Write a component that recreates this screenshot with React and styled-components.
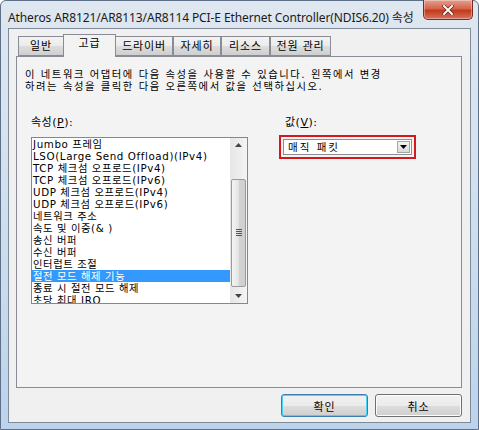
import styled, { createGlobalStyle } from 'styled-components'

const GlobalStyle = createGlobalStyle`
  html, body { margin: 0; padding: 0; background: #ffffff; }
  body { font-family: "DejaVu Sans", "Noto Sans CJK KR", sans-serif; }
`

const KR = `"DejaVu Sans", "Noto Sans CJK KR", sans-serif`

const Window = styled.div`
  width: 479px;
  height: 430px;
  box-sizing: border-box;
  padding: 0 7px 6px 7px;
  display: flex;
  flex-direction: column;
  border: 1px solid #5e7088;
  border-radius: 6px 6px 0 0;
  background: linear-gradient(180deg, #dfe7f0 0%, #d3e1ef 40%, #bcd3eb 100%);
`

const TitleBar = styled.div`
  height: 27px;
  display: flex;
  justify-content: space-between;
  align-items: flex-start;
  margin-right: -2px;
`

const Title = styled.div`
  padding-top: 9px;
  font-family: "Noto Sans", "Noto Sans CJK KR", sans-serif;
  font-size: 12px;
  line-height: 16px;
  color: #1b1b1b;
  white-space: nowrap;
  letter-spacing: -0.1px;
`

const CloseButton = styled.div`
  width: 48px;
  height: 19px;
  margin-top: -1px;
  border: 1px solid #7a2b25;
  border-top: none;
  border-radius: 0 0 5px 5px;
  background: linear-gradient(180deg, #e5a08f 0%, #d5644b 45%, #c23a1c 55%, #d8735c 100%);
  display: flex;
  align-items: center;
  justify-content: center;
  box-shadow: inset 0 0 0 1px rgba(255,255,255,0.35);
`

const Client = styled.div`
  flex: 1;
  border: 1px solid #7f8b99;
  background: #f0f0f0;
  display: flex;
  flex-direction: column;
  padding: 5px 8px 5px 7px;
`

const TabStrip = styled.div`
  display: flex;
  align-items: flex-end;
  padding-left: 2px;
  height: 22px;
  position: relative;
  z-index: 1;
`

const Tab = styled.div`
  box-sizing: border-box;
  width: ${p => p.$w}px;
  height: ${p => (p.$active ? 23 : 20)}px;
  margin: ${p => (p.$active ? '0 -1px -1px -1px' : '0')};
  padding-top: ${p => (p.$active ? 2 : 3)}px;
  border: 1px solid #898c95;
  border-bottom: ${p => (p.$active ? 'none' : '1px solid #898c95')};
  background: ${p => (p.$active ? '#f3f3f3' : 'linear-gradient(180deg, #f3f3f3 0%, #ebebeb 50%, #dddddd 51%, #cfcfcf 100%)')};
  font-family: ${KR};
  font-size: 11px;
  line-height: 13px;
  letter-spacing: 0.8px;
  color: #000;
  text-align: center;
  white-space: nowrap;
  position: relative;
  z-index: ${p => (p.$active ? 2 : 0)};
`

const Panel = styled.div`
  height: 332px;
  box-sizing: border-box;
  border: 1px solid #898c95;
  background: #f3f3f3;
  padding: 11px 8px 0 8px;
  display: flex;
  flex-direction: column;
`

const Description = styled.p`
  margin: 0;
  font-family: ${KR};
  font-size: 10.3px;
  line-height: 12px;
  color: #000;
  letter-spacing: 1.55px;
  white-space: nowrap;
`

const Fields = styled.div`
  display: flex;
  gap: 32px;
  padding: 24px 0 0 6px;
`

const Column = styled.div`
  display: flex;
  flex-direction: column;
  width: ${p => p.$width}px;
`

const Label = styled.div`
  font-family: ${KR};
  font-size: 11px;
  line-height: 13px;
  letter-spacing: 0.5px;
  color: #000;
  margin: 0 0 ${p => p.$gap}px ${p => p.$indent}px;
  u { text-decoration: underline; }
`

const ListBox = styled.div`
  height: 167px;
  box-sizing: border-box;
  border: 1px solid #828790;
  background: #fff;
  display: flex;
  overflow: hidden;
`

const Items = styled.div`
  flex: 1;
  overflow: hidden;
`

const Item = styled.div`
  height: 12px;
  font-family: ${KR};
  font-size: 10.3px;
  line-height: 12px;
  letter-spacing: 0.6px;
  padding-left: 1px;
  white-space: nowrap;
  color: ${p => (p.$selected ? '#fff' : '#000')};
  background: ${p => (p.$selected ? '#3399ff' : 'transparent')};
`

const ScrollBar = styled.div`
  width: 17px;
  background: linear-gradient(90deg, #e6e6e6, #f4f4f4);
  display: flex;
  flex-direction: column;
  align-items: center;
`

const Arrow = styled.div`
  height: 17px;
  display: flex;
  align-items: center;
  justify-content: center;
`

const Track = styled.div`
  flex: 1;
  width: 100%;
  display: flex;
  flex-direction: column;
  padding-top: 26px;
  padding-bottom: 2px;
  box-sizing: border-box;
`

const Thumb = styled.div`
  height: 106px;
  margin: 0 1px;
  border: 1px solid #9b9b9b;
  border-radius: 2px;
  background: linear-gradient(90deg, #f5f5f5 0%, #e4e4e4 50%, #d2d2d2 51%, #cfcfcf 100%);
  display: flex;
  align-items: center;
  justify-content: center;
`

const Grip = styled.div`
  width: 6px;
  height: 8px;
  background: repeating-linear-gradient(180deg, #555 0 1px, transparent 1px 2px);
`

const Highlight = styled.div`
  border: 2px solid #d6171e;
  padding: 2px;
  margin-left: -1px;
`

const Combo = styled.div`
  height: 16px;
  box-sizing: border-box;
  border: 1px solid #8f8f8f;
  background: #fff;
  display: flex;
  align-items: stretch;
  padding: 1px;
`

const ComboText = styled.div`
  flex: 1;
  font-family: ${KR};
  font-size: 10.5px;
  line-height: 12px;
  letter-spacing: 2px;
  padding-left: 3px;
  color: #000;
`

const DropButton = styled.div`
  width: 11px;
  border: 1px solid #a5a5a5;
  background: linear-gradient(180deg, #f4f4f4, #d9d9d9);
  display: flex;
  align-items: center;
  justify-content: center;
`

const ButtonRow = styled.div`
  display: flex;
  justify-content: flex-end;
  gap: 7px;
  padding-top: 6px;
`

const Button = styled.button`
  width: 87px;
  height: 23px;
  border: 1px solid ${p => (p.$default ? '#3c7fb1' : '#707070')};
  border-radius: 3px;
  background: linear-gradient(180deg, #f2f2f2 0%, #ebebeb 50%, #dddddd 51%, #cfcfcf 100%);
  box-shadow: inset 0 0 0 1px ${p => (p.$default ? '#48d3fb' : '#fcfcfc')};
  font-family: ${KR};
  font-size: 11px;
  letter-spacing: 1px;
  color: #000;
  padding: 0;
`

const tabs = [
  { name: '일반', w: 46 },
  { name: '고급', w: 53 },
  { name: '드라이버', w: 58 },
  { name: '자세히', w: 48 },
  { name: '리소스', w: 49 },
  { name: '전원 관리', w: 61 },
]

const props = [
  'Jumbo 프레임',
  'LSO(Large Send Offload)(IPv4)',
  'TCP 체크섬 오프로드(IPv4)',
  'TCP 체크섬 오프로드(IPv6)',
  'UDP 체크섬 오프로드(IPv4)',
  'UDP 체크섬 오프로드(IPv6)',
  '네트워크 주소',
  '속도 및 이중(& )',
  '송신 버퍼',
  '수신 버퍼',
  '인터럽트 조절',
  '절전 모드 해제 기능',
  '종료 시 절전 모드 해제',
  '초당 최대 IRQ',
]

export default function App() {
  return (
    <>
      <GlobalStyle />
      <Window>
        <TitleBar>
          <Title>Atheros AR8121/AR8113/AR8114 PCI-E Ethernet Controller(NDIS6.20) 속성</Title>
          <CloseButton>
            <svg width="12" height="10" viewBox="0 0 12 10">
              <path d="M2 1 L10 9 M10 1 L2 9" stroke="#5a1a10" strokeWidth="3.2" strokeLinecap="square" />
              <path d="M2 1 L10 9 M10 1 L2 9" stroke="#ffffff" strokeWidth="2" strokeLinecap="square" />
            </svg>
          </CloseButton>
        </TitleBar>
        <Client>
          <TabStrip>
            {tabs.map(t => (
              <Tab key={t.name} $w={t.w} $active={t.name === '고급'}>{t.name}</Tab>
            ))}
          </TabStrip>
          <Panel>
            <Description>
              이 네트워크 어댑터에 다음 속성을 사용할 수 있습니다. 왼쪽에서 변경<br />
              하려는 속성을 클릭한 다음 오른쪽에서 값을 선택하십시오.
            </Description>
            <Fields>
              <Column $width={217}>
                <Label $gap={8} $indent={0}>속성(<u>P</u>):</Label>
                <ListBox>
                  <Items>
                    {props.map(p => (
                      <Item key={p} $selected={p === '절전 모드 해제 기능'}>{p}</Item>
                    ))}
                  </Items>
                  <ScrollBar>
                    <Arrow>
                      <svg width="7" height="4" viewBox="0 0 7 4"><path d="M0 4 L3.5 0 L7 4 Z" fill="#444" /></svg>
                    </Arrow>
                    <Track>
                      <Thumb><Grip /></Thumb>
                    </Track>
                    <Arrow>
                      <svg width="7" height="4" viewBox="0 0 7 4"><path d="M0 0 L7 0 L3.5 4 Z" fill="#444" /></svg>
                    </Arrow>
                  </ScrollBar>
                </ListBox>
              </Column>
              <Column $width={136}>
                <Label $gap={6} $indent={5}>값(<u>V</u>):</Label>
                <Highlight>
                  <Combo>
                    <ComboText>매직 패킷</ComboText>
                    <DropButton>
                      <svg width="7" height="4" viewBox="0 0 7 4"><path d="M0 0 L7 0 L3.5 4 Z" fill="#000" /></svg>
                    </DropButton>
                  </Combo>
                </Highlight>
              </Column>
            </Fields>
          </Panel>
          <ButtonRow>
            <Button $default>확인</Button>
            <Button>취소</Button>
          </ButtonRow>
        </Client>
      </Window>
    </>
  )
}
